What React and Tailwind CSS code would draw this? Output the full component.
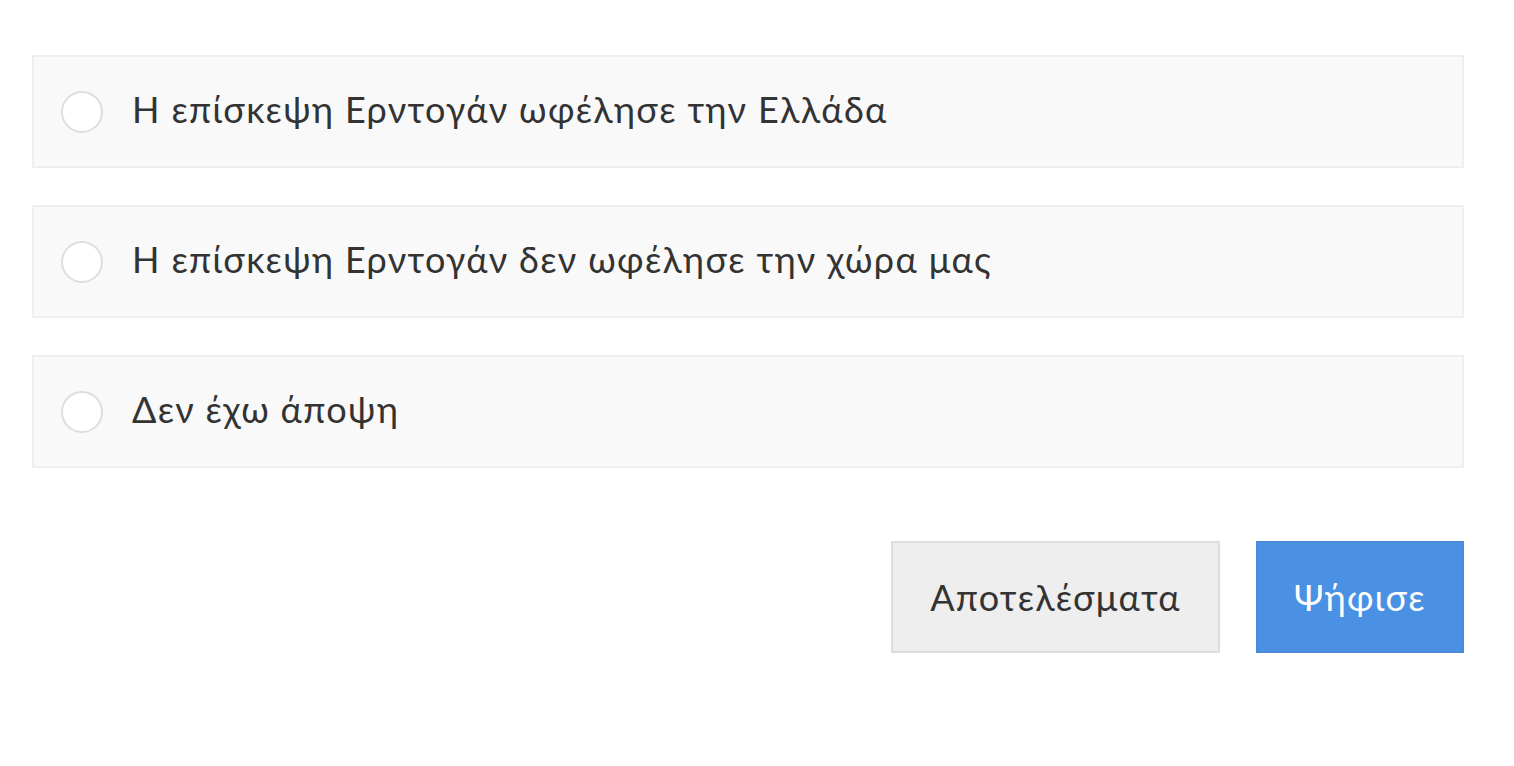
import React, { useState } from 'react';

const options = [
  'Η επίσκεψη Ερντογάν ωφέλησε την Ελλάδα',
  'Η επίσκεψη Ερντογάν δεν ωφέλησε την χώρα μας',
  'Δεν έχω άποψη',
];

const App = () => {
  const [selected, setSelected] = useState(null);

  return (
    <div
      className="min-h-screen bg-white pt-[55px] pl-[32px] w-[1464px] text-[#333]"
      style={{ fontFamily: 'Lato, "Noto Sans", sans-serif' }}
    >
      <div className="flex flex-col gap-[37px]">
        {options.map((opt, i) => (
          <label
            key={i}
            className="flex items-center h-[113px] bg-[#f9f9f9] border-2 border-[#efefef] pl-[27px] cursor-pointer"
          >
            <span className="w-[42px] h-[42px] rounded-full bg-white border-2 border-[#dedede] flex items-center justify-center shrink-0">
              {selected === i && <span className="w-[20px] h-[20px] rounded-full bg-[#4a91e4]" />}
            </span>
            <input
              type="radio"
              name="poll"
              className="hidden"
              checked={selected === i}
              onChange={() => setSelected(i)}
            />
            <span className="ml-[29px] mb-[6px] text-[36px] leading-none tracking-[1.35px]">{opt}</span>
          </label>
        ))}
      </div>

      {/* buttons */}
      <div className="flex justify-end gap-[36px] mt-[73px]">
        <button className="w-[329px] h-[112px] bg-[#eeeeee] border-2 border-[#dddddd] text-[36px] text-[#333] tracking-[1.3px]">
          Αποτελέσματα
        </button>
        <button className="w-[208px] h-[112px] bg-[#4a91e4] border-2 border-[#4a8ad8] text-[36px] text-white tracking-[1.3px]">
          Ψήφισε
        </button>
      </div>
    </div>
  );
};

export default App;
